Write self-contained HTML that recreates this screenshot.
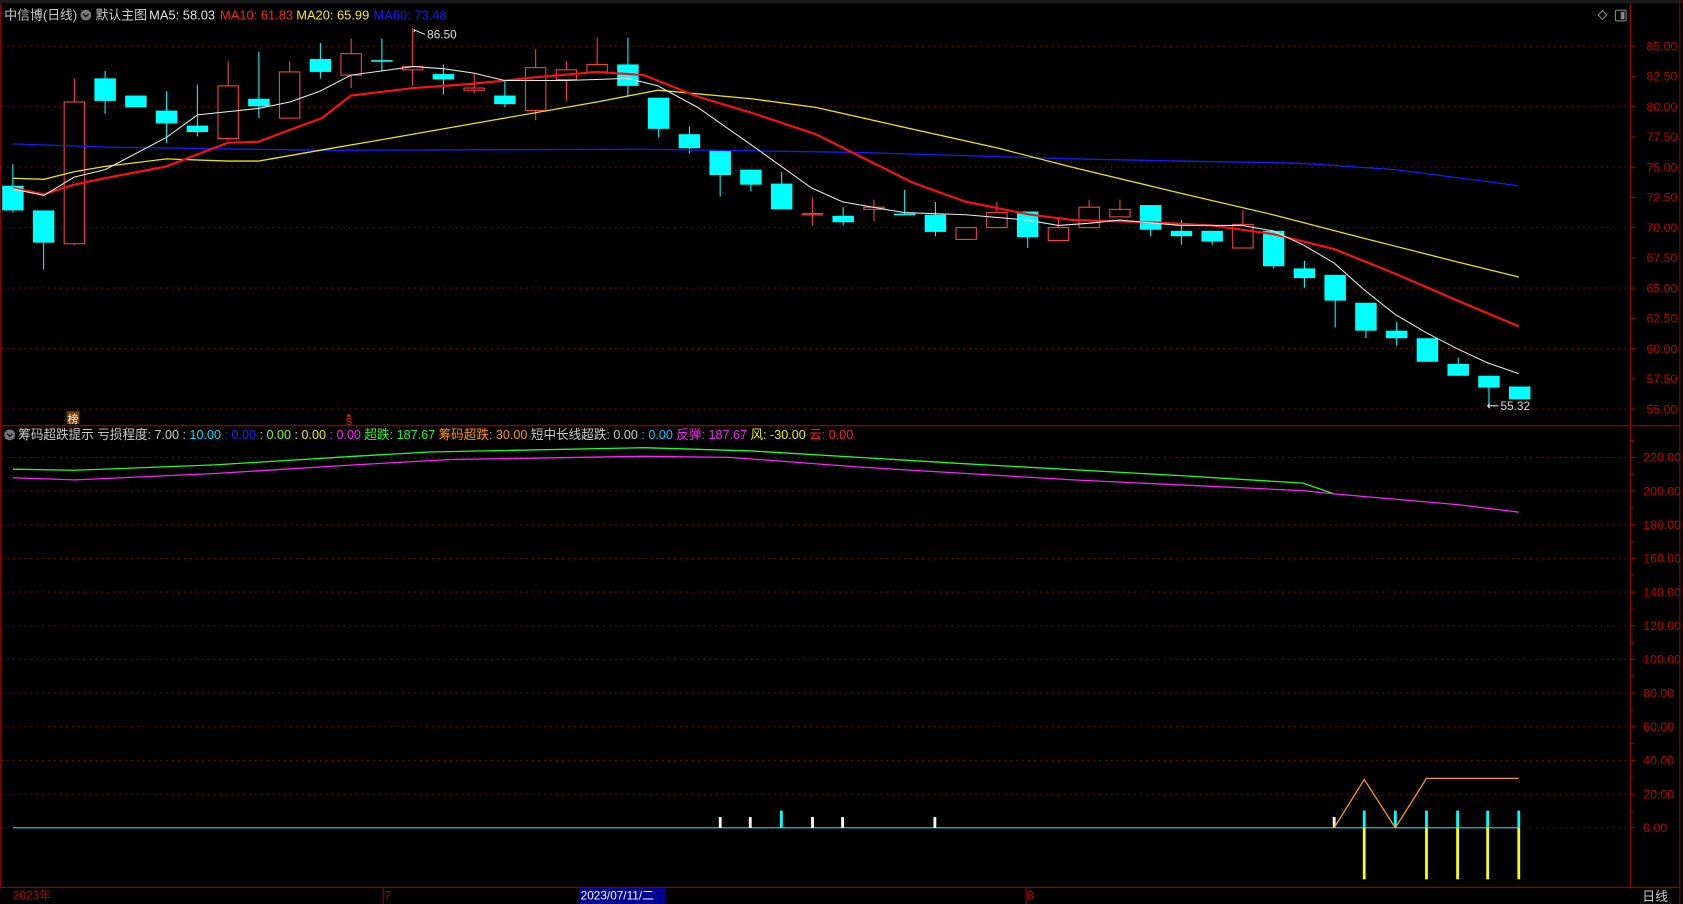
<!DOCTYPE html>
<html><head><meta charset="utf-8"><style>
html,body{margin:0;padding:0;background:#000;overflow:hidden}
svg{display:block}
text{font-family:"Liberation Sans","Noto Sans CJK SC",sans-serif}
</style></head><body>
<svg id="s" width="1683" height="904" viewBox="0 0 1568 842" preserveAspectRatio="none" xmlns="http://www.w3.org/2000/svg">
<rect width="1568" height="842" fill="#000"/>
<rect x="0" y="0" width="1568" height="3" fill="#1a1a1a"/>
<g id="grid"></g>
<g id="main"></g>
<line x1="1519" y1="3" x2="1519" y2="826" stroke="#900000" stroke-width="1.2"/>
<line x1="1565" y1="0" x2="1565" y2="842" stroke="#900000" stroke-width="1"/>
<line x1="0" y1="396.5" x2="1519" y2="396.5" stroke="#900000" stroke-width="1.2"/>
<line x1="1519" y1="396.5" x2="1565" y2="396.5" stroke="#900000" stroke-width="1.2"/>
<line x1="0" y1="826.5" x2="1565" y2="826.5" stroke="#900000" stroke-width="1.2"/>
<line x1="0.5" y1="3" x2="0.5" y2="826" stroke="#900000" stroke-width="1"/>
<text x="4" y="18" font-size="12" fill="#cccccc">中信博(日线)</text>
<circle cx="80" cy="14" r="5" fill="#777"/><path d="M77.5 13 L80 15.5 L82.5 13" stroke="#111" stroke-width="1.3" fill="none"/>
<text x="89" y="18" font-size="12" fill="#cccccc">默认主图</text>
<text x="139" y="18" font-size="12" fill="#e6e6e6">MA5: 58.03</text>
<text x="205" y="18" font-size="12" fill="#ff2020">MA10: 61.83</text>
<text x="276" y="18" font-size="12" fill="#f0f000">MA20: 65.99</text>
<text x="348" y="18" font-size="12" fill="#1a1aff">MA60: 73.48</text>
<path d="M1493 10 L1497 14 L1493 18 L1489 14 Z" stroke="#888" fill="none"/>
<rect x="1505" y="9.5" width="10" height="10" rx="1.5" stroke="#888" fill="none"/><rect x="1510" y="11" width="3.5" height="7" fill="#888"/>
<path d="M386 27 L386 30 M386 28 L396 32" stroke="#ddd" stroke-width="1" fill="none"/>
<text x="398" y="36" font-size="11" fill="#ddd">86.50</text>
<path d="M1386 378 L1396 378 M1388 376 L1386 378 L1388 380" stroke="#ddd" fill="none"/>
<text x="1398" y="382" font-size="11" fill="#ddd">55.32</text>
<rect x="62" y="383" width="12" height="12" fill="#7a3f00"/><text x="63" y="394" font-size="10" fill="#fff">榜</text>
<path d="M325 385 L323 388 L327 388 Z" fill="#ff2020"/><text x="322" y="396" font-size="9" fill="#ff2020">S</text>
<circle cx="9" cy="405" r="5" fill="#777"/><path d="M6.5 404 L9 406.5 L11.5 404" stroke="#111" stroke-width="1.3" fill="none"/>
<text font-size="12" y="409" x="17" textLength="778" lengthAdjust="spacingAndGlyphs"><tspan fill="#cccccc">筹码超跌提示 亏损程度: 7.00 </tspan><tspan fill="#cccccc">: </tspan><tspan fill="#00e0ff">10.00 </tspan><tspan fill="#2020ff">: 0.00 </tspan><tspan fill="#90ff00">: 0.00 </tspan><tspan fill="#f0f000">: 0.00 </tspan><tspan fill="#ff20ff">: 0.00 </tspan><tspan fill="#20ff20">超跌: 187.67 </tspan><tspan fill="#ff9900">筹码超跌: 30.00 </tspan><tspan fill="#cccccc">短中长线超跌: 0.00 </tspan><tspan fill="#00ccff">: 0.00 </tspan><tspan fill="#ff20ff">反弹: 187.67 </tspan><tspan fill="#f0f000">风: -30.00 </tspan><tspan fill="#ff2020">云: 0.00</tspan></text>
<g id="ind"></g>
<text x="12" y="838" font-size="11" fill="#c00000">2023年</text>
<line x1="357" y1="827" x2="357" y2="842" stroke="#a00000"/><text x="358" y="838" font-size="11" fill="#c00000">7</text>
<rect x="540" y="827" width="80" height="15" fill="#000090"/><text x="541" y="838" font-size="11" fill="#fff">2023/07/11/二</text>
<line x1="956" y1="827" x2="956" y2="842" stroke="#a00000"/><text x="957" y="838" font-size="11" fill="#c00000">8</text>
<text x="1530" y="839" font-size="12" fill="#ccc">日线</text>
</svg>
<script>
var NS="http://www.w3.org/2000/svg";
function el(p,t,a){var e=document.createElementNS(NS,t);for(var k in a)e.setAttribute(k,a[k]);p.appendChild(e);return e;}
var g=document.getElementById('grid'),m=document.getElementById('main'),ind=document.getElementById('ind'),s=document.getElementById('s');
function py(p){return 43+(85-p)*11.267;}
for(var p=85;p>=55;p-=2.5){var y=py(p);
 if(Math.abs(p%5)<0.01) el(g,'line',{x1:1,y1:y,x2:1519,y2:y,stroke:'#8a0000','stroke-dasharray':'1.5,4','stroke-width':1});
 el(g,'line',{x1:1519,y1:y,x2:1524,y2:y,stroke:'#a00000'});
 var t=el(s,'text',{x:1534,y:y+4,'font-size':11.5,fill:'#c00000'});t.textContent=p.toFixed(2);}
function iy(v){return 771-v*1.568;}
for(var v=220;v>=0;v-=20){var y=iy(v);
 el(g,'line',{x1:1,y1:y,x2:1519,y2:y,stroke:'#8a0000','stroke-dasharray':'1.5,4','stroke-width':1});
 el(g,'line',{x1:1519,y1:y,x2:1524,y2:y,stroke:'#a00000'});
 el(g,'line',{x1:1519,y1:y-15.7,x2:1522,y2:y-15.7,stroke:'#a00000'});
 var t=el(s,'text',{x:1531,y:y+4,'font-size':11.5,fill:'#c00000'});t.textContent=v.toFixed(2);}
var C=[[0,173,196,153,198],[0,196,226,196,251],[1,95,227,73,228],[0,73,94,66,106],[0,89,100,89,100],[0,103,115,85,133],[0,117,123,79,127],[1,80,129,57,131],[0,92,99,48,110],[1,67,110,57,110],
[0,55,67,40,73],[1,50,70,36,82],[0,56,57.5,36,66],[1,62,65,26,80],[0,69,74,60,88],[1,82,84,68,87],[0,89,97,75,100],[1,63,103,46,112],[1,65,74,57,94],[1,60,67,35,67],
[0,60,80,35,90],[0,91,120,91,128],[0,125,138,118,143],[0,140,163,140,183],[0,158,172,158,178],[0,171,195,160,195],[1,199,200,184,210],[0,201,207,193,210],[1,193,195,186,206],[0,199,200.5,177,200],
[0,200,216,188,220],[1,212,223,212,223],[1,198,212,188,212],[0,197,221,197,231],[1,212,224,202,224],[1,193,212,186,212],[1,195,202,186,202],[0,191,214,191,220],[0,215,220,205,228],[0,215,225,215,228],
[1,209,231,196,231],[0,215,248,215,250],[0,250,259,243,268],[0,256,280,256,305],[0,282,308,282,315],[0,308,315,300,322],[0,315,337,315,337],[0,339,350,333,350],[0,350,361,350,380],[0,360,372,360,372]];
C.forEach(function(c,i){var x=12+i*28.65,col=c[0]?'#ff4040':'#00ffff';
 el(m,'line',{x1:x,y1:c[3],x2:x,y2:c[4],stroke:col,'stroke-width':1});
 var h=Math.max(c[2]-c[1],1.2);
 if(c[0]) el(m,'rect',{x:x-9.5,y:c[1],width:19,height:h,fill:'#000',stroke:col,'stroke-width':1});
 else el(m,'rect',{x:x-10,y:c[1],width:20,height:h,fill:col});});
function pl(par,pts,col,w){el(par,'polyline',{points:pts,fill:'none',stroke:col,'stroke-width':w});}
pl(m,"12,134 100,137 300,140 600,139 800,142 1000,148 1100,150 1210,152 1300,158 1415,173","#1a1aff",1.2);
pl(m,"12,166 41,167 69,160 98,155 155,148 212,150 241,150 298,140 356,130 470,110 556,95 613,84 700,92 760,100 840,118 930,138 1000,156 1100,180 1186,200 1271,222 1358,244 1415,258","#e6e600",1.2);
pl(m,"12,175 41,181 69,172 98,166 155,155 212,133 241,132 270,121 300,110 327,89 385,82 441,78 499,72 556,67 600,70 650,90 700,105 760,125 800,145 850,170 900,188 960,200 1000,205 1071,207 1129,210 1186,218 1243,232 1300,255 1358,280 1415,304","#ff1010",2);
pl(m,"12,176 41,182 69,165 98,158 155,128 184,107 241,101 270,95 298,85 327,70 356,66 385,62 413,64 441,68 470,75 528,75 585,73 613,80 650,100 700,135 756,175 785,188 842,198 900,200 957,205 986,210 1014,208 1043,205 1100,210 1157,210 1186,215 1214,228 1243,245 1271,270 1300,293 1329,310 1358,325 1386,338 1415,348","#e8e8e8",1);
pl(ind,"12,437 70,438 200,433 330,425 400,421 600,417 700,420 900,432 1100,443 1214,450 1243,460","#20ff20",1.2);
pl(ind,"12,445 70,447 200,441 330,433 420,428 600,425 680,426 800,435 1000,447 1214,457 1243,460 1300,465 1358,470 1415,477","#ff20ff",1.2);
el(ind,'line',{x1:12,y1:771,x2:1415,y2:771,stroke:'#00c8e8','stroke-width':1.2});
[671,699,757,785,871,1243].forEach(function(x){el(ind,'rect',{x:x-1.3,y:761,width:2.6,height:10,fill:'#fff'});});
[728,1271,1300,1329,1358,1386,1415].forEach(function(x){el(ind,'rect',{x:x-1.3,y:755,width:2.6,height:16,fill:'#00ffff'});});
[1271,1329,1358,1386,1415].forEach(function(x){el(ind,'rect',{x:x-1.3,y:771,width:2.6,height:48,fill:'#ffff00'});});
pl(ind,"1243,771 1271,726 1300,771 1329,725 1415,725","#ff9900",1.2);
</script>
</body></html>
